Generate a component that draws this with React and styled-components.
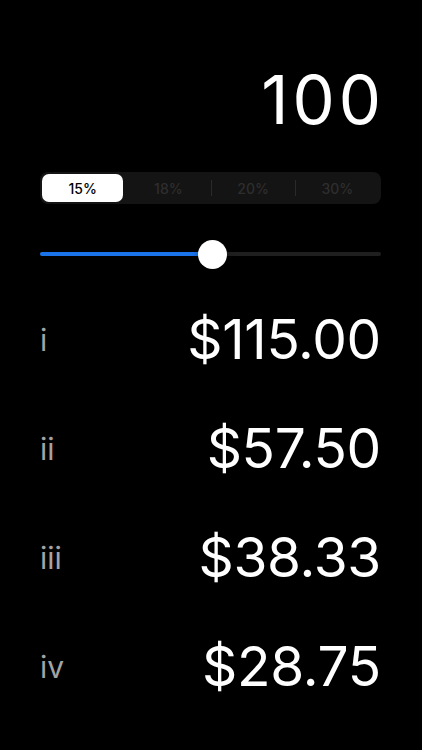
import styled, { createGlobalStyle } from "styled-components";

const GlobalStyle = createGlobalStyle`
  html, body {
    margin: 0;
    padding: 0;
    background: #000;
  }
  body {
    font-family: "Inter", "Roboto", sans-serif;
    -webkit-font-smoothing: antialiased;
  }
`;

const Screen = styled.div`
  width: 422px;
  height: 750px;
  background: #000;
  color: #fff;
  box-sizing: border-box;
  padding: 0 41px 0 40px;
  display: flex;
  flex-direction: column;
`;

const Amount = styled.div`
  font-size: 67px;
  font-weight: 400;
  line-height: 80px;
  text-align: right;
  margin-top: 60px;
  letter-spacing: 4px;
  margin-right: -4px;
`;

const Segmented = styled.div`
  margin-top: 32px;
  height: 32px;
  background: #141414;
  border-radius: 8px;
  padding: 2px;
  box-sizing: border-box;
  display: grid;
  grid-template-columns: repeat(4, 1fr);
  align-items: center;
`;

const Segment = styled.div`
  display: flex;
  align-items: center;
  justify-content: center;
  font-size: 14px;
  font-weight: 500;
  color: ${(p) => (p.$active ? "#000" : "#2e2e2e")};
  background: ${(p) => (p.$active ? "#fff" : "transparent")};
  border-left: ${(p) => (p.$divider ? "1px solid #2a2a2a" : "none")};
  border-radius: ${(p) => (p.$divider ? "0" : "7px")};
  height: ${(p) => (p.$divider ? "16px" : "28px")};
  margin-right: ${(p) => (p.$active ? "3px" : "0")};
`;

const SliderWrap = styled.div`
  margin-top: 35px;
  height: 30px;
  display: flex;
  align-items: center;
`;

const Track = styled.div`
  flex: 1;
  height: 4px;
  border-radius: 2px;
  background: #1f1f1f;
  position: relative;
`;

const Fill = styled.div`
  height: 100%;
  border-radius: 2px;
  background: #1a73e8;
`;

const Thumb = styled.div`
  position: absolute;
  top: 50%;
  width: 29px;
  height: 29px;
  margin-left: -14.5px;
  margin-top: -14.5px;
  border-radius: 50%;
  background: #fff;
  box-shadow: 0 2px 6px rgba(0, 0, 0, 0.3);
`;

const Rows = styled.div`
  margin-top: 16px;
  display: flex;
  flex-direction: column;
`;

const Row = styled.div`
  height: 109px;
  display: flex;
  align-items: center;
  justify-content: space-between;
`;

const Label = styled.span`
  font-size: 30px;
  line-height: 1;
  color: #a3a3a3;
  font-weight: 400;
`;

const Value = styled.span`
  font-size: 55px;
  font-weight: 400;
  line-height: 1;
  letter-spacing: -0.3px;
`;

const tips = ["15%", "18%", "20%", "30%"];
const rows = [
  ["i", "$115.00"],
  ["ii", "$57.50"],
  ["iii", "$38.33"],
  ["iv", "$28.75"],
];

const App = () => {
  const pct = 50.6;
  return (
    <>
      <GlobalStyle />
      <Screen>
        <Amount>100</Amount>
        <Segmented>
          {tips.map((t, i) => (
            <Segment key={t} $active={i === 0} $divider={i > 1}>
              {t}
            </Segment>
          ))}
        </Segmented>
        <SliderWrap>
          <Track>
            <Fill style={{ width: `${pct}%` }} />
            <Thumb style={{ left: `${pct}%` }} />
          </Track>
        </SliderWrap>
        <Rows>
          {rows.map(([l, v]) => (
            <Row key={l}>
              <Label>{l}</Label>
              <Value>{v}</Value>
            </Row>
          ))}
        </Rows>
      </Screen>
    </>
  );
};

export default App;
